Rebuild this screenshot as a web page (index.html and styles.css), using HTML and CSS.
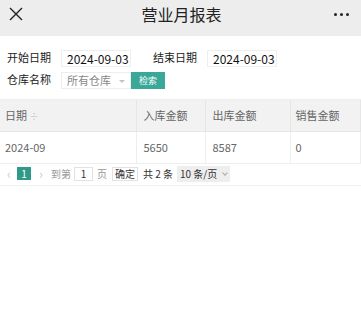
FILE: index.html
```html
<!DOCTYPE html>
<html>
	<head>
		<meta charset="UTF-8">
		<title>营业月报表</title>
		<link rel="stylesheet" href="styles.css">
	</head>
	<body>
		<div class="top">
			<span class="close">
				<svg width="14" height="14" viewBox="0 0 14 14"><path d="M1 1L13 13M13 1L1 13" stroke="#222" stroke-width="1.4" fill="none"/></svg>
			</span>
			<span class="title">营业月报表</span>
			<span class="more"><i></i><i></i><i></i></span>
		</div>
		<div class="form">
			<div class="row">
				<label>开始日期</label>
				<span class="ipt">2024-09-03</span>
				<label class="l2">结束日期</label>
				<span class="ipt">2024-09-03</span>
			</div>
			<div class="row">
				<label>仓库名称</label>
				<span class="sel">所有仓库<em></em></span>
				<a href="javascript:;" class="btn">检索</a>
			</div>
		</div>
		<table class="grid">
			<thead>
				<tr>
					<th class="c1">日期 <span class="sort">&#247;</span></th>
					<th class="c2">入库金额</th>
					<th class="c3">出库金额</th>
					<th class="c4">销售金额</th>
				</tr>
			</thead>
			<tbody>
				<tr>
					<td>2024-09</td>
					<td>5650</td>
					<td>8587</td>
					<td>0</td>
				</tr>
			</tbody>
		</table>
		<div class="page">
			<span class="arr">&lsaquo;</span>
			<span class="cur">1</span>
			<span class="arr">&rsaquo;</span>
			<span class="txt">到第</span>
			<span class="go">1</span>
			<span class="txt">页</span>
			<span class="ok">确定</span>
			<span class="total">共 2 条</span>
			<span class="limit">10 条/页 <em></em></span>
		</div>
	</body>
</html>
```
FILE: styles.css
```css
*{
	margin: 0;
	padding: 0;
	box-sizing: border-box;
}
body{
	font-family: "Noto Sans CJK SC", "Noto Sans", sans-serif;
	background: #fff;
	color: #333;
}
.top{
	height: 36px;
	background: #ededed;
	display: flex;
	align-items: center;
	justify-content: space-between;
	padding: 0 12px 0 9px;
}
.close{
	display: flex;
	width: 14px;
	margin-top: -8px;
}
.title{
	font-size: 16px;
	color: #222;
	margin-top: -8px;
	margin-left: 6px;
}
.more{
	display: flex;
	gap: 3px;
	margin-top: -8px;
}
.more i{
	width: 3px;
	height: 3px;
	background: #222;
	border-radius: 50%;
}
.form{
	padding: 14px 0 10px 7px;
	border-bottom: 1px solid #eee;
}
.row{
	display: flex;
	align-items: center;
	height: 17px;
	margin-bottom: 5px;
}
.row:last-child{
	margin-bottom: 0;
}
.row label{
	font-size: 11px;
	color: #222;
	width: 54px;
	margin-top: -4px;
}
.row .l2{
	margin-left: 22px;
}
.ipt{
	width: 70px;
	height: 17px;
	border: 1px solid #eee;
	font-size: 12px;
	line-height: 15px;
	padding-left: 5px;
	color: #111;
	white-space: nowrap;
}
.sel{
	width: 70px;
	height: 17px;
	border: 1px solid #eee;
	font-size: 11px;
	line-height: 15px;
	padding-left: 5px;
	color: #888;
	position: relative;
}
.sel em{
	position: absolute;
	right: 5px;
	top: 7px;
	border: 3px solid transparent;
	border-top-color: #c2c2c2;
}
.btn{
	display: block;
	width: 34px;
	height: 17px;
	background: #3aa898;
	color: #fff;
	font-size: 9px;
	line-height: 17px;
	text-align: center;
	text-decoration: none;
}
.grid{
	width: 361px;
	border-collapse: collapse;
	table-layout: fixed;
	font-size: 11px;
	color: #666;
}
.grid th{
	height: 31px;
	background: #f2f2f2;
	font-weight: normal;
	text-align: left;
	padding-left: 5px;
	border-right: 1px solid #e6e6e6;
	border-bottom: 1px solid #e6e6e6;
}
.grid td{
	height: 32px;
	padding-left: 5px;
	border-right: 1px solid #eee;
	border-bottom: 1px solid #eee;
}
.grid .c1{
	width: 136px;
}
.grid .c2{
	width: 69px;
	padding-left: 7px;
}
.grid .c3{
	width: 85px;
	padding-left: 7px;
}
.grid td:nth-child(2), .grid td:nth-child(3){
	padding-left: 7px;
}
.grid .sort{
	color: #bbb;
	font-size: 9px;
}
.page{
	display: flex;
	align-items: center;
	height: 22px;
	padding: 2px 0 3px 3px;
	font-size: 10px;
	color: #333;
	border-bottom: 1px solid #f0f0f0;
}
.arr{
	color: #ccc;
	font-size: 13px;
	width: 12px;
	text-align: center;
}
.cur{
	width: 14px;
	height: 13px;
	background: #2f9a88;
	color: #fff;
	text-align: center;
	line-height: 13px;
	margin: 0 4px 0 2px;
}
.txt{
	color: #999;
	margin-left: 4px;
}
.go{
	width: 19px;
	height: 14px;
	border: 1px solid #e2e2e2;
	text-align: center;
	line-height: 12px;
	margin-left: 3px;
}
.ok{
	height: 14px;
	border: 1px solid #e2e2e2;
	padding: 0 2px;
	line-height: 12px;
	margin-left: 5px;
}
.total{
	margin-left: 5px;
	white-space: pre;
}
.limit{
	height: 16px;
	background: #eee;
	padding: 0 3px;
	margin-left: 4px;
	line-height: 16px;
	font-size: 10px;
	color: #333;
	display: flex;
	align-items: center;
	gap: 3px;
	white-space: pre;
}
.limit em{
	width: 4px;
	height: 4px;
	border-right: 1px solid #aaa;
	border-bottom: 1px solid #aaa;
	transform: rotate(45deg);
	margin-top: -2px;
}
```
